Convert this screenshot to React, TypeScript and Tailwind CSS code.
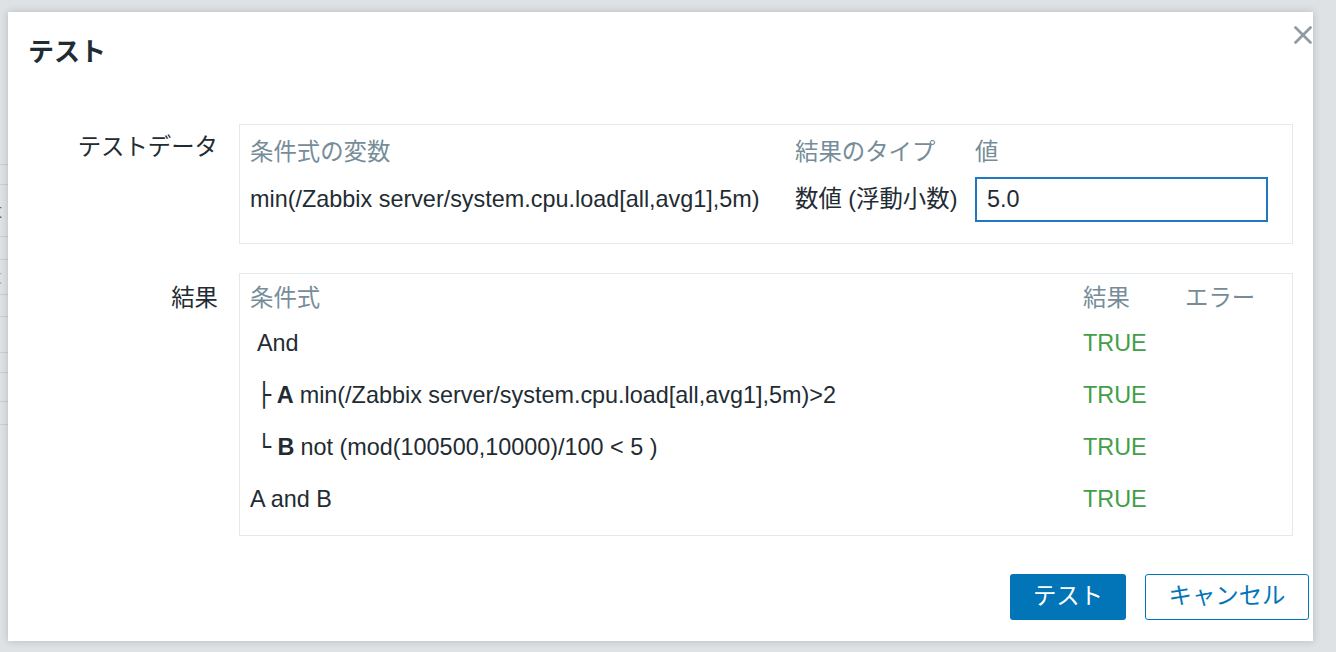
import { X } from 'lucide-react';

const font = { fontFamily: '"Liberation Sans", Arial, "Noto Sans CJK JP", sans-serif' };

const backRows = [
  { h: 'h-[25px]', t: '' },
  { h: 'h-[20px]', t: '' },
  { h: 'h-[52px]', t: 'dark' },
  { h: 'h-[23px]', t: '' },
  { h: 'h-[35px]', t: 'light' },
  { h: 'h-[22px]', t: '' },
  { h: 'h-[36px]', t: '' },
  { h: 'h-[20px]', t: '' },
  { h: 'h-[29px]', t: '' },
  { h: 'h-[23px]', t: '' },
];

const results = [
  { indent: true, mark: '', key: '', expr: 'And' },
  { indent: true, mark: '├', key: 'A', expr: 'min(/Zabbix server/system.cpu.load[all,avg1],5m)>2' },
  { indent: true, mark: '└', key: 'B', expr: 'not (mod(100500,10000)/100 < 5 )' },
  { indent: false, mark: '', key: '', expr: 'A and B' },
];

export default function App() {
  return (
    <div className="relative h-[652px] w-full overflow-hidden bg-[#dfe2e5]" style={font}>
      <BackgroundTable />

      <div className="absolute left-[8px] top-[12px] flex h-[629px] w-[1305px] flex-col bg-white text-[#1f2c33] shadow-[0_0_8px_rgba(0,0,0,0.18)]">
        <header className="flex items-start justify-between pl-5 pt-[22px]">
          <h1 className="text-[26px] font-bold leading-[36px]">テスト</h1>
          <button type="button" className="-mr-[5px] -mt-[14px] text-[#8e9ba3]">
            <X size={30} strokeWidth={2.2} />
          </button>
        </header>

        <div className="mt-[54px] grid grid-cols-[210px_1054px] gap-x-[21px] gap-y-[29px] text-[23.4px]">
          <div className="pt-[8px] text-right leading-[30px]">テストデータ</div>
          <TestDataBox />

          <div className="pt-[10px] text-right leading-[30px]">結果</div>
          <ResultBox />
        </div>

        <footer className="mt-[38px] flex justify-end gap-[19px] pr-[4px] text-[23.4px]">
          <button
            type="button"
            className="h-[46px] w-[116px] rounded-[3px] bg-[#0275b8] text-white"
          >
            テスト
          </button>
          <button
            type="button"
            className="h-[46px] w-[164px] rounded-[3px] border border-[#0275b8] bg-white text-[#0275b8]"
          >
            キャンセル
          </button>
        </footer>
      </div>
    </div>
  );
}

function BackgroundTable() {
  return (
    <div className="flex w-[8px] flex-col pt-[140px]">
      {backRows.map((row, i) => (
        <div
          key={i}
          className={`flex items-center overflow-hidden border-b border-[#c9ced2] ${row.h}`}
        >
          {row.t && (
            <span
              className={`-ml-[4px] text-[20px] leading-none ${row.t === 'dark' ? 'text-[#5d6a72]' : 'text-[#a9b2b8]'}`}
            >
              t
            </span>
          )}
        </div>
      ))}
    </div>
  );
}

function TestDataBox() {
  return (
    <div className="h-[120px] border border-[#e6e9eb] px-[10px] pt-[12px]">
      <div className="grid grid-cols-[545px_180px_293px] leading-[30px] text-[#768d99]">
        <div>条件式の変数</div>
        <div>結果のタイプ</div>
        <div>値</div>
      </div>
      <div className="mt-[10px] grid h-[45px] grid-cols-[545px_180px_293px] items-center">
        <div className="whitespace-nowrap">min(/Zabbix server/system.cpu.load[all,avg1],5m)</div>
        <div className="whitespace-nowrap">数値 (浮動小数)</div>
        <input
          readOnly
          value="5.0"
          className="h-[45px] w-[293px] border-2 border-solid border-[#1f78c1] px-[10px] text-[23.4px] text-[#1f2c33] outline-none"
        />
      </div>
    </div>
  );
}

function ResultBox() {
  return (
    <div className="h-[263px] border border-[#e6e9eb] px-[10px] pt-[9px]">
      <div className="grid grid-cols-[833px_102px_1fr] leading-[30px] text-[#768d99]">
        <div>条件式</div>
        <div>結果</div>
        <div>エラー</div>
      </div>
      <div className="mt-[5px]">
        {results.map((r, i) => (
          <div key={i} className="grid h-[52px] grid-cols-[833px_102px_1fr] items-center">
            <div className={`whitespace-nowrap ${r.indent ? 'pl-[7px]' : ''}`}>
              {r.key && (
                <b className="mr-[6px]">
                  <span style={{ fontFamily: '"DejaVu Sans", sans-serif' }}>{r.mark}</span>
                  {' '}
                  {r.key}
                </b>
              )}
              {r.expr}
            </div>
            <div className="text-[#429e47]">TRUE</div>
            <div />
          </div>
        ))}
      </div>
    </div>
  );
}
